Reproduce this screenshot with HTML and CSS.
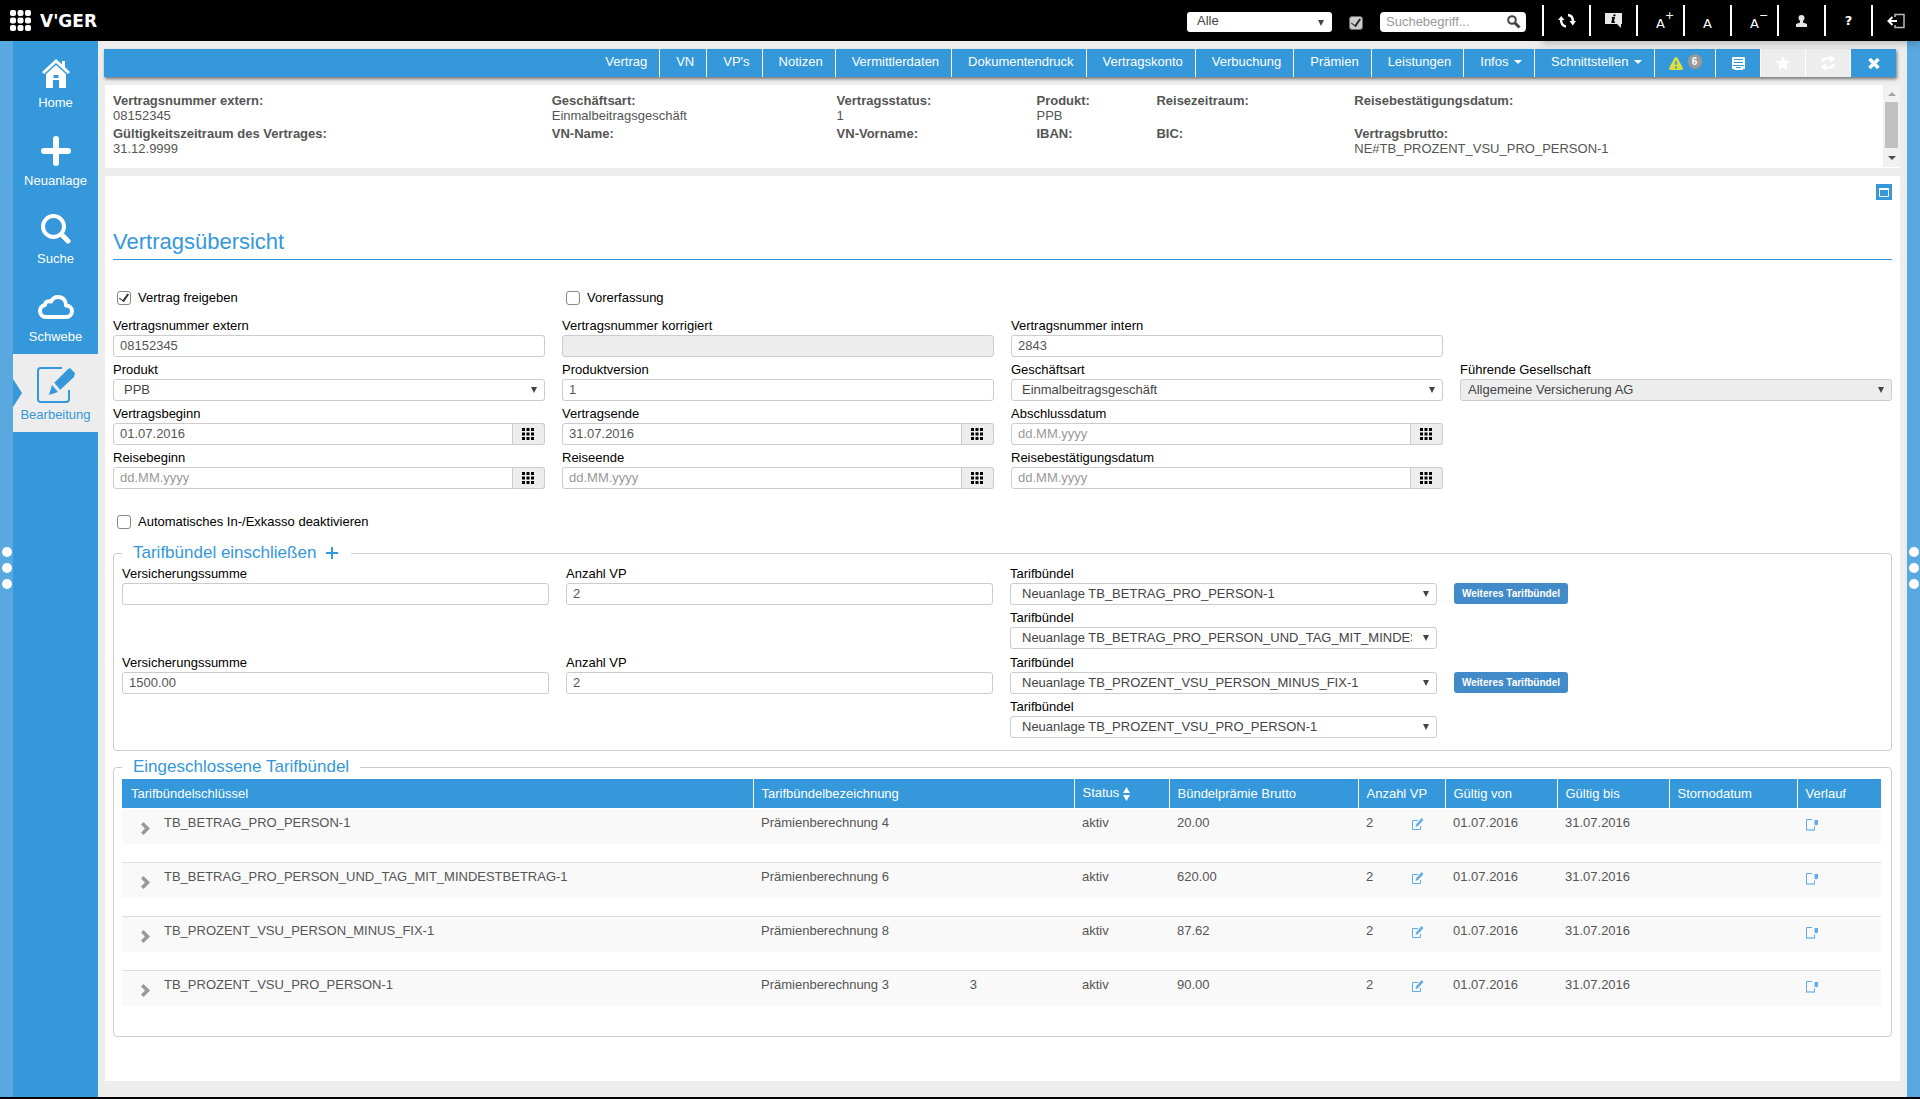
FILE: index.html
```html
<!DOCTYPE html>
<html lang="de">
<head>
    <meta charset="UTF-8">
    <title>Vertragsübersicht</title>
    <link rel="stylesheet" href="styles.css">
</head>
<body>

<!-- Shared icons -->
<svg class="sprite" aria-hidden="true">
    <symbol id="icoGrid" viewBox="0 0 13 13">
        <path d="M0 0h3v3H0zM4.500 0h3v3h-3zM9 0h3v3H9zM0 4.500h3v3H0zM4.500 4.500h3v3h-3zM9 4.500h3v3H9zM0 9h3v3H0zM4.500 9h3v3h-3zM9 9h3v3H9z"/>
    </symbol>
    <symbol id="icoChevron" viewBox="0 0 9 13">
        <path d="M0 2.500 2.500 0 9 6.500 2.500 13 0 10.500l4-4z"/>
    </symbol>
    <symbol id="icoEdit" viewBox="0 0 13 13">
        <path d="M7 2.500H1.500v9h8V8" fill="none" stroke="currentColor"/>
        <path d="M10.500 0 12.500 2 7 8 4.500 9l.8-2.800z"/>
    </symbol>
    <symbol id="icoNote" viewBox="0 0 14 14">
        <path d="M7 1.500H1.500v10.500M9.500 8.500v3.500" fill="none" stroke="currentColor"/>
        <path d="M9.500 2h3.500v4.500L11 7.500l-1.500-1z"/>
        <path d="M1 11h9v2H1z" opacity=".6"/>
    </symbol>
</svg>

<header class="topbar">
    <button type="button" class="topbar__apps" aria-label="Apps">
        <svg width="21" height="21" viewBox="0 0 21 21" fill="currentColor">
            <rect x="0" y="0" width="6" height="6" rx="2"/><rect x="7.500" y="0" width="6" height="6" rx="2"/><rect x="15" y="0" width="6" height="6" rx="2"/>
            <rect x="0" y="7.500" width="6" height="6" rx="2"/><rect x="7.500" y="7.500" width="6" height="6" rx="2"/><rect x="15" y="7.500" width="6" height="6" rx="2"/>
            <rect x="0" y="15" width="6" height="6" rx="2"/><rect x="7.500" y="15" width="6" height="6" rx="2"/><rect x="15" y="15" width="6" height="6" rx="2"/>
        </svg>
    </button>
    <a href="#" class="topbar__logo">V'GER</a>

    <form action="#" class="search">
        <span class="select search__scope">
            <select class="select__input" aria-label="Bereich"><option>Alle</option></select>
        </span>
        <input type="checkbox" class="checkbox search__check" aria-label="Filter" checked>
        <span class="search__box">
            <input type="text" class="search__input" placeholder="Suchebegriff..." aria-label="Suchebegriff">
            <button type="submit" class="search__btn" aria-label="Suchen">
                <svg width="14" height="14" viewBox="0 0 14 14" fill="none" stroke="currentColor">
                    <circle cx="5" cy="5" r="3.800" stroke-width="2"/><path d="m8 8 4.500 4.500" stroke-width="3"/>
                </svg>
            </button>
        </span>
    </form>

    <div class="tools">
        <button type="button" class="tools__btn" aria-label="Aktualisieren">
            <svg width="18" height="16" viewBox="0 0 18 16">
                <path d="M3 6c0 4 1.500 7 5 7.500M10 2c3.500.5 5 3 5 6.500" fill="none" stroke="currentColor" stroke-width="2.500"/>
                <path d="M0 7l3.200-4L6.500 7zM11.500 8h6.500l-3.200 4.500z" fill="currentColor"/>
            </svg>
        </button>
        <button type="button" class="tools__btn" aria-label="Info">
            <svg width="19" height="17" viewBox="0 0 19 17">
                <path d="M1 1h17v11h-1v4l-4-4H1z" fill="#e8e8e8"/>
                <path d="M9.500 2.500h2.200l-.4 1.700H9.100zM8 5h3L10 9.500h1L10.800 11H7.200L8.300 6.300H7.600z" fill="#000"/>
            </svg>
        </button>
        <button type="button" class="tools__btn tools__btn--font" aria-label="Schrift größer">A<sup class="tools__sup">+</sup></button>
        <button type="button" class="tools__btn tools__btn--font" aria-label="Schrift normal">A</button>
        <button type="button" class="tools__btn tools__btn--font" aria-label="Schrift kleiner">A<sup class="tools__sup">−</sup></button>
        <button type="button" class="tools__btn" aria-label="Benutzer">
            <svg width="11" height="12" viewBox="0 0 11 12" fill="#e2e4e8">
                <circle cx="5.500" cy="3" r="3"/><path d="M4 5h3v2.500l4 1.500v3H0V9l4-1.500z"/>
            </svg>
        </button>
        <button type="button" class="tools__btn tools__btn--help" aria-label="Hilfe">?</button>
        <button type="button" class="tools__btn" aria-label="Abmelden">
            <svg width="18" height="16" viewBox="0 0 18 16" fill="none" stroke="currentColor">
                <path d="M8 4V1.500h9v13H8V12" stroke="#bbb" stroke-width="1.500"/>
                <path d="M10 8H2M5.500 4 1.500 8l4 4" stroke-width="2"/>
            </svg>
        </button>
    </div>
</header>

<div class="layout">
    <div class="edge"><span class="edge__dot"></span><span class="edge__dot"></span><span class="edge__dot"></span></div>

    <nav class="sidebar">
        <a href="#" class="sidebar__item">
            <svg class="sidebar__icon" width="30" height="30" viewBox="0 0 30 30" fill="currentColor">
                <path d="M15 1 1 14l2 2L15 5l12 11 2-2-5-4.700V3h-3v3.500z"/>
                <path d="M15 7 5 16v14h7v-8h6v8h7V16zM12.500 17h5v3h-5z" fill-rule="evenodd"/>
            </svg>
            Home
        </a>
        <a href="#" class="sidebar__item">
            <svg class="sidebar__icon" width="30" height="30" viewBox="0 0 30 30" fill="none" stroke="currentColor" stroke-width="6" stroke-linecap="round">
                <path d="M15 3v24M3 15h24"/>
            </svg>
            Neuanlage
        </a>
        <a href="#" class="sidebar__item">
            <svg class="sidebar__icon" width="30" height="30" viewBox="0 0 30 30" fill="none" stroke="currentColor" stroke-linecap="round">
                <circle cx="12.500" cy="12.500" r="10.500" stroke-width="4"/><path d="m21 21 6 6" stroke-width="5"/>
            </svg>
            Suche
        </a>
        <a href="#" class="sidebar__item">
            <svg class="sidebar__icon" width="38" height="26" viewBox="0 0 38 26" fill="none" stroke="currentColor" stroke-width="4" stroke-linejoin="round">
                <path d="M9 23a6 6 0 0 1-6-6 6 6 0 0 1 5-6c0-3 3-4.500 6-3.500C15.500 4.500 18 3 21 3c5 0 8 3.500 8 8.500 3.500 0 6 2.500 6 5.500 0 3.500-2.500 6-6 6z"/>
            </svg>
            Schwebe
        </a>
        <a href="#" class="sidebar__item sidebar__item--active">
            <svg class="sidebar__icon" width="40" height="38" viewBox="0 0 40 38">
                <path d="M26 2H5a3 3 0 0 0-3 3v28a3 3 0 0 0 3 3h25a3 3 0 0 0 3-3v-9" fill="none" stroke="currentColor" stroke-width="2"/>
                <path d="m31 4 3-2 5 5-1 4-14 13-6-7zM16 19l6 7-9 3z" fill="currentColor"/>
                <path d="m16 16 7 8" stroke="#ededed" stroke-width="2"/>
            </svg>
            Bearbeitung
        </a>
    </nav>

    <main class="content">
        <nav class="tabs">
            <a href="#" class="tabs__item">Vertrag</a>
            <a href="#" class="tabs__item">VN</a>
            <a href="#" class="tabs__item">VP's</a>
            <a href="#" class="tabs__item">Notizen</a>
            <a href="#" class="tabs__item">Vermittlerdaten</a>
            <a href="#" class="tabs__item">Dokumentendruck</a>
            <a href="#" class="tabs__item">Vertragskonto</a>
            <a href="#" class="tabs__item">Verbuchung</a>
            <a href="#" class="tabs__item">Prämien</a>
            <a href="#" class="tabs__item">Leistungen</a>
            <a href="#" class="tabs__item">Infos <span class="tabs__caret"></span></a>
            <a href="#" class="tabs__item">Schnittstellen <span class="tabs__caret"></span></a>
            <button type="button" class="tabs__btn tabs__btn--wide" aria-label="Warnungen">
                <svg width="14" height="13" viewBox="0 0 14 13">
                    <path d="M7 0q1 0 1.500 1L14 11q0 2-1.500 2h-11Q0 13 0 11L5.500 1Q6 0 7 0z" fill="#dcdc3c"/>
                    <path d="M6 4h2l-.4 4H6.400zM6 9.500h2v2H6z" fill="#3498db"/>
                </svg>
                <span class="tabs__badge">6</span>
            </button>
            <button type="button" class="tabs__btn" aria-label="Speichern">
                <svg width="13" height="13" viewBox="0 0 13 13">
                    <path d="M1 0h11q1 0 1 1v11h-2v1H2v-1H0V1q0-1 1-1z" fill="#fff"/>
                    <path d="M2 2.500h9M2 5.500h9M1 8.500h11M4 10.500h5" stroke="#3498db"/>
                </svg>
            </button>
            <button type="button" class="tabs__btn" aria-label="Favorit" disabled>
                <svg width="14" height="14" viewBox="0 0 14 14" fill="currentColor">
                    <path d="m7 0 2.100 4.700 4.900.6-3.600 3.400 1 5.300L7 11.300 2.600 14l1-5.300L0 5.300l4.900-.6z"/>
                </svg>
            </button>
            <button type="button" class="tabs__btn" aria-label="Neu laden" disabled>
                <svg width="16" height="16" viewBox="0 0 16 16">
                    <path d="M2 7c0-3 4-4 9-3.500M14 9c0 3-4 4-9 3.500" fill="none" stroke="currentColor" stroke-width="2.500"/>
                    <path d="m10 0 5 4-5 4zM6 8l-5 4 5 4z" fill="currentColor"/>
                </svg>
            </button>
            <button type="button" class="tabs__btn" aria-label="Schließen">
                <svg width="12" height="11" viewBox="0 0 12 11" fill="none" stroke="currentColor" stroke-width="3.500"><path d="m1.500 1 9 9M10.500 1l-9 9"/></svg>
            </button>
        </nav>

        <section class="summary">
            <dl class="summary__list">
                <div><dt>Vertragsnummer extern:</dt><dd>08152345</dd></div>
                <div><dt>Geschäftsart:</dt><dd>Einmalbeitragsgeschäft</dd></div>
                <div><dt>Vertragsstatus:</dt><dd>1</dd></div>
                <div><dt>Produkt:</dt><dd>PPB</dd></div>
                <div><dt>Reisezeitraum:</dt><dd></dd></div>
                <div><dt>Reisebestätigungsdatum:</dt><dd></dd></div>
                <div><dt>Gültigkeitszeitraum des Vertrages:</dt><dd>31.12.9999</dd></div>
                <div><dt>VN-Name:</dt><dd></dd></div>
                <div><dt>VN-Vorname:</dt><dd></dd></div>
                <div><dt>IBAN:</dt><dd></dd></div>
                <div><dt>BIC:</dt><dd></dd></div>
                <div><dt>Vertragsbrutto:</dt><dd>NE#TB_PROZENT_VSU_PRO_PERSON-1</dd></div>
            </dl>
            <div class="scroll" aria-hidden="true">
                <span class="scroll__arrow scroll__arrow--up"></span>
                <span class="scroll__thumb"></span>
                <span class="scroll__arrow"></span>
            </div>
        </section>

        <form action="#" class="panel">
            <button type="button" class="panel__toggle" aria-label="Maximieren">
                <svg width="10" height="9" viewBox="0 0 10 9" fill="none" stroke="#fff"><path d="M.5 1h9v7.500h-9z"/><path d="M0 1h10" stroke-width="2"/></svg>
            </button>
            <h1 class="panel__title">Vertragsübersicht</h1>

            <div class="grid">
                <label class="check"><input type="checkbox" class="checkbox" checked> Vertrag freigeben</label>
                <label class="check"><input type="checkbox" class="checkbox"> Vorerfassung</label>
            </div>

            <div class="grid grid--fields">
                <div class="field">
                    <label for="vnExtern" class="field__label">Vertragsnummer extern</label>
                    <input type="text" id="vnExtern" class="input" value="08152345">
                </div>
                <div class="field">
                    <label for="vnKorr" class="field__label">Vertragsnummer korrigiert</label>
                    <input type="text" id="vnKorr" class="input" disabled>
                </div>
                <div class="field">
                    <label for="vnIntern" class="field__label">Vertragsnummer intern</label>
                    <input type="text" id="vnIntern" class="input" value="2843">
                </div>

                <div class="field grid__first">
                    <label for="produkt" class="field__label">Produkt</label>
                    <span class="select"><select id="produkt" class="select__input"><option>PPB</option></select></span>
                </div>
                <div class="field">
                    <label for="version" class="field__label">Produktversion</label>
                    <input type="text" id="version" class="input" value="1">
                </div>
                <div class="field">
                    <label for="art" class="field__label">Geschäftsart</label>
                    <span class="select"><select id="art" class="select__input"><option>Einmalbeitragsgeschäft</option></select></span>
                </div>
                <div class="field">
                    <label for="gesellschaft" class="field__label">Führende Gesellschaft</label>
                    <span class="select"><select id="gesellschaft" class="select__input" disabled><option>Allgemeine Versicherung AG</option></select></span>
                </div>

                <div class="field">
                    <label for="vBeginn" class="field__label">Vertragsbeginn</label>
                    <span class="date"><input type="text" id="vBeginn" class="input" value="01.07.2016"><button type="button" class="date__btn" aria-label="Kalender"><svg width="13" height="13"><use href="#icoGrid"/></svg></button></span>
                </div>
                <div class="field">
                    <label for="vEnde" class="field__label">Vertragsende</label>
                    <span class="date"><input type="text" id="vEnde" class="input" value="31.07.2016"><button type="button" class="date__btn" aria-label="Kalender"><svg width="13" height="13"><use href="#icoGrid"/></svg></button></span>
                </div>
                <div class="field">
                    <label for="abschluss" class="field__label">Abschlussdatum</label>
                    <span class="date"><input type="text" id="abschluss" class="input" placeholder="dd.MM.yyyy"><button type="button" class="date__btn" aria-label="Kalender"><svg width="13" height="13"><use href="#icoGrid"/></svg></button></span>
                </div>

                <div class="field grid__first">
                    <label for="rBeginn" class="field__label">Reisebeginn</label>
                    <span class="date"><input type="text" id="rBeginn" class="input" placeholder="dd.MM.yyyy"><button type="button" class="date__btn" aria-label="Kalender"><svg width="13" height="13"><use href="#icoGrid"/></svg></button></span>
                </div>
                <div class="field">
                    <label for="rEnde" class="field__label">Reiseende</label>
                    <span class="date"><input type="text" id="rEnde" class="input" placeholder="dd.MM.yyyy"><button type="button" class="date__btn" aria-label="Kalender"><svg width="13" height="13"><use href="#icoGrid"/></svg></button></span>
                </div>
                <div class="field">
                    <label for="rDatum" class="field__label">Reisebestätigungsdatum</label>
                    <span class="date"><input type="text" id="rDatum" class="input" placeholder="dd.MM.yyyy"><button type="button" class="date__btn" aria-label="Kalender"><svg width="13" height="13"><use href="#icoGrid"/></svg></button></span>
                </div>
            </div>

            <label class="check check--single"><input type="checkbox" class="checkbox"> Automatisches In-/Exkasso deaktivieren</label>

            <fieldset class="box">
                <legend class="box__title">Tarifbündel einschließen
                    <button type="button" class="box__add" aria-label="Tarifbündel hinzufügen">
                        <svg width="12" height="12" viewBox="0 0 12 12" stroke="currentColor" stroke-width="2"><path d="M6 0v12M0 6h12"/></svg>
                    </button>
                </legend>

                <div class="grid bundle">
                    <div class="field">
                        <label for="summe1" class="field__label">Versicherungssumme</label>
                        <input type="text" id="summe1" class="input">
                    </div>
                    <div class="field">
                        <label for="anzahl1" class="field__label">Anzahl VP</label>
                        <input type="text" id="anzahl1" class="input" value="2">
                    </div>
                    <div class="bundle__selects">
                        <div class="field">
                            <label for="tb1" class="field__label">Tarifbündel</label>
                            <span class="select"><select id="tb1" class="select__input"><option>Neuanlage TB_BETRAG_PRO_PERSON-1</option></select></span>
                        </div>
                        <div class="field">
                            <label for="tb2" class="field__label">Tarifbündel</label>
                            <span class="select"><select id="tb2" class="select__input"><option>Neuanlage TB_BETRAG_PRO_PERSON_UND_TAG_MIT_MINDESTBETRAG-1</option></select></span>
                        </div>
                    </div>
                    <button type="button" class="bundle__more">Weiteres Tarifbündel</button>
                </div>

                <div class="grid bundle">
                    <div class="field">
                        <label for="summe2" class="field__label">Versicherungssumme</label>
                        <input type="text" id="summe2" class="input" value="1500.00">
                    </div>
                    <div class="field">
                        <label for="anzahl2" class="field__label">Anzahl VP</label>
                        <input type="text" id="anzahl2" class="input" value="2">
                    </div>
                    <div class="bundle__selects">
                        <div class="field">
                            <label for="tb3" class="field__label">Tarifbündel</label>
                            <span class="select"><select id="tb3" class="select__input"><option>Neuanlage TB_PROZENT_VSU_PERSON_MINUS_FIX-1</option></select></span>
                        </div>
                        <div class="field">
                            <label for="tb4" class="field__label">Tarifbündel</label>
                            <span class="select"><select id="tb4" class="select__input"><option>Neuanlage TB_PROZENT_VSU_PRO_PERSON-1</option></select></span>
                        </div>
                    </div>
                    <button type="button" class="bundle__more">Weiteres Tarifbündel</button>
                </div>
            </fieldset>

            <fieldset class="box">
                <legend class="box__title">Eingeschlossene Tarifbündel</legend>

                <table class="table">
                    <colgroup>
                        <col class="table__key"><col class="table__name"><col class="table__status"><col class="table__sum"><col class="table__count">
                        <col class="table__date"><col class="table__date"><col class="table__storno"><col class="table__history">
                    </colgroup>
                    <thead>
                        <tr>
                            <th>Tarifbündelschlüssel</th>
                            <th>Tarifbündelbezeichnung</th>
                            <th>Status <svg width="7" height="14" viewBox="0 0 7 14" fill="currentColor"><path d="M3.500 0 7 6H0zM0 8h7l-3.500 6z"/></svg></th>
                            <th>Bündelprämie Brutto</th>
                            <th>Anzahl VP</th>
                            <th>Gültig von</th>
                            <th>Gültig bis</th>
                            <th>Stornodatum</th>
                            <th>Verlauf</th>
                        </tr>
                    </thead>
                    <tbody>
                        <tr class="table__row">
                            <td><div class="table__toggle"><button type="button" class="table__btn table__btn--open" aria-label="Aufklappen"><svg width="9" height="13"><use href="#icoChevron"/></svg></button>TB_BETRAG_PRO_PERSON-1</div></td>
                            <td>Prämienberechnung 4</td>
                            <td>aktiv</td>
                            <td>20.00</td>
                            <td><div class="table__edit">2 <button type="button" class="table__btn" aria-label="Bearbeiten"><svg width="13" height="13"><use href="#icoEdit"/></svg></button></div></td>
                            <td>01.07.2016</td>
                            <td>31.07.2016</td>
                            <td></td>
                            <td><button type="button" class="table__btn" aria-label="Verlauf"><svg width="14" height="14"><use href="#icoNote"/></svg></button></td>
                        </tr>
                        <tr class="table__detail"><td colspan="9"></td></tr>
                        <tr class="table__row">
                            <td><div class="table__toggle"><button type="button" class="table__btn table__btn--open" aria-label="Aufklappen"><svg width="9" height="13"><use href="#icoChevron"/></svg></button>TB_BETRAG_PRO_PERSON_UND_TAG_MIT_MINDESTBETRAG-1</div></td>
                            <td>Prämienberechnung 6</td>
                            <td>aktiv</td>
                            <td>620.00</td>
                            <td><div class="table__edit">2 <button type="button" class="table__btn" aria-label="Bearbeiten"><svg width="13" height="13"><use href="#icoEdit"/></svg></button></div></td>
                            <td>01.07.2016</td>
                            <td>31.07.2016</td>
                            <td></td>
                            <td><button type="button" class="table__btn" aria-label="Verlauf"><svg width="14" height="14"><use href="#icoNote"/></svg></button></td>
                        </tr>
                        <tr class="table__detail"><td colspan="9"></td></tr>
                        <tr class="table__row">
                            <td><div class="table__toggle"><button type="button" class="table__btn table__btn--open" aria-label="Aufklappen"><svg width="9" height="13"><use href="#icoChevron"/></svg></button>TB_PROZENT_VSU_PERSON_MINUS_FIX-1</div></td>
                            <td>Prämienberechnung 8</td>
                            <td>aktiv</td>
                            <td>87.62</td>
                            <td><div class="table__edit">2 <button type="button" class="table__btn" aria-label="Bearbeiten"><svg width="13" height="13"><use href="#icoEdit"/></svg></button></div></td>
                            <td>01.07.2016</td>
                            <td>31.07.2016</td>
                            <td></td>
                            <td><button type="button" class="table__btn" aria-label="Verlauf"><svg width="14" height="14"><use href="#icoNote"/></svg></button></td>
                        </tr>
                        <tr class="table__detail"><td colspan="9"></td></tr>
                        <tr class="table__row">
                            <td><div class="table__toggle"><button type="button" class="table__btn table__btn--open" aria-label="Aufklappen"><svg width="9" height="13"><use href="#icoChevron"/></svg></button>TB_PROZENT_VSU_PRO_PERSON-1</div></td>
                            <td><div class="table__calc"><span>Prämienberechnung 3</span><span>3</span></div></td>
                            <td>aktiv</td>
                            <td>90.00</td>
                            <td><div class="table__edit">2 <button type="button" class="table__btn" aria-label="Bearbeiten"><svg width="13" height="13"><use href="#icoEdit"/></svg></button></div></td>
                            <td>01.07.2016</td>
                            <td>31.07.2016</td>
                            <td></td>
                            <td><button type="button" class="table__btn" aria-label="Verlauf"><svg width="14" height="14"><use href="#icoNote"/></svg></button></td>
                        </tr>
                        <tr class="table__detail"><td colspan="9"></td></tr>
                    </tbody>
                </table>
            </fieldset>
        </form>
    </main>

    <div class="edge"><span class="edge__dot"></span><span class="edge__dot"></span><span class="edge__dot"></span></div>
</div>

</body>
</html>
```
FILE: styles.css
```css
* {
    box-sizing: border-box;
}

body {
    display: flex;
    flex-direction: column;
    min-height: 100vh;
    margin: 0;
    border-bottom: 2px solid #000;
    background-color: #ededed;
    color: #000;
    font: 13px/15px "Liberation Sans", Arial, sans-serif;
}

button,
input,
select {
    margin: 0;
    font: inherit;
    color: inherit;
}
button {
    padding: 0;
    border: 0;
    background: none;
    cursor: pointer;
}
a {
    color: inherit;
    text-decoration: none;
}
svg {
    display: block;
}

.sprite {
    display: none;
}

/* Top bar */

.topbar {
    display: flex;
    align-items: center;
    height: 41px;
    padding-left: 10px;
    background-color: #000;
    color: #fff;
}
.topbar__logo {
    margin-left: 9px;
    font: bold 17px/20px "DejaVu Sans", sans-serif;
}

.search {
    display: flex;
    align-items: center;
    margin-left: auto;
    padding-top: 2px;
    color: #444;
}
.search__scope {
    width: 145px;
}
.search__scope .select__input {
    height: 20px;
    border: 0;
}
.search__check {
    margin: 2px 17px 0;
    opacity: .8;
}
.search__box {
    display: flex;
    align-items: center;
    width: 146px;
    height: 20px;
    padding: 0 5px 0 6px;
    border-radius: 4px;
    background-color: #fff;
}
.search__input {
    flex: 1;
    min-width: 0;
    padding: 0;
    border: 0;
    outline: none;
    background: none;
}
.search__input::placeholder,
.input::placeholder {
    color: #999;
}

.tools {
    position: relative;
    display: flex;
    align-items: center;
    height: 41px;
    margin-left: 16px;
    padding-right: 2px;
    background-color: #000;
    box-shadow: 0 3px 7px rgba(0, 0, 0, .2);
}
.tools__btn {
    display: flex;
    justify-content: center;
    align-items: center;
    width: 47px;
    height: 31px;
    border-left: 2px solid #fff;
}
.tools__btn--font {
    padding-top: 6px;
    font: 13px/15px "DejaVu Sans", sans-serif;
}
.tools__sup {
    width: 8px;
    height: 32px;
    margin-right: -8px;
    font-size: 11px;
}
.tools__btn--help {
    font: bold 13px/15px "DejaVu Sans", sans-serif;
}

/* Page frame */

.layout {
    display: flex;
    flex: 1;
}

.edge {
    display: flex;
    flex-direction: column;
    justify-content: center;
    align-items: center;
    gap: 6px;
    width: 13px;
    padding-bottom: 2px;
    background-color: #5aa8e0;
}
.edge__dot {
    width: 10px;
    height: 10px;
    border-radius: 50%;
    background-color: #fff;
}

.sidebar {
    width: 85px;
    padding-top: 1px;
    background-color: #3498db;
    color: #fff;
    text-align: center;
}
.sidebar__item {
    position: relative;
    display: block;
    height: 78px;
    padding-top: 12px;
}
.sidebar__icon {
    height: 38px;
    margin: 0 auto 3px;
}
.sidebar__item--active {
    background-color: #ededed;
    color: #3498db;
}
.sidebar__item--active::before {
    content: "";
    position: absolute;
    top: 25px;
    left: 0;
    border: 14px solid transparent;
    border-left: 9px solid #3498db;
    border-right: 0;
}

.content {
    display: flex;
    flex: 1;
    flex-direction: column;
    gap: 8px;
    min-width: 0;
    padding: 8px 7px 16px;
}

/* Tabs */

.tabs {
    display: flex;
    justify-content: flex-end;
    height: 28px;
    margin: 0 4px 0 -1px;
    background-color: #3498db;
    box-shadow: 1px 2px 3px rgba(0, 0, 0, .5);
    color: #fff;
    line-height: 26px;
}
.tabs__item {
    padding: 0 12px 0 16px;
    border-right: 1px solid #fff;
}
.tabs__caret {
    display: inline-block;
    margin: 0 0 2px 2px;
    border: 4px solid transparent;
    border-top-color: #fff;
    border-bottom: 0;
    vertical-align: middle;
}
.tabs__btn {
    display: flex;
    justify-content: center;
    align-items: center;
    gap: 5px;
    width: 45px;
    border-right: 1px solid #fff;
}
.tabs__btn:last-child {
    border-right: 0;
}
.tabs__btn:disabled {
    background-color: #ededed;
    color: #fff;
}
.tabs__btn--wide {
    width: 61px;
}
.tabs__badge {
    width: 14px;
    margin-bottom: 4px;
    border-radius: 7px;
    background-color: #999;
    font-size: 10px;
    font-weight: bold;
    line-height: 15px;
}

/* Contract summary */

.summary {
    display: flex;
    height: 83px;
    background-color: #fff;
    color: #555;
}
.summary__list {
    display: grid;
    flex: 1;
    grid-template-columns: 439fr 285fr 200fr 120fr 198fr 529fr;
    align-content: start;
    row-gap: 3px;
    margin: 0;
    padding: 8px 0 0 8px;
}
.summary__list dt {
    font-weight: bold;
}
.summary__list dd {
    min-height: 15px;
    margin: 0;
}

.scroll {
    display: flex;
    flex-direction: column;
    align-items: center;
    width: 17px;
    margin-bottom: 1px;
    background-color: #f1f1f1;
}
.scroll__thumb {
    width: 13px;
    height: 46px;
    margin: 6px 0 8px;
    background-color: #c1c1c1;
}
.scroll__arrow {
    border: 4px solid transparent;
    border-top-color: #505050;
    border-bottom: 0;
}
.scroll__arrow--up {
    margin-top: 7px;
    border-top: 0;
    border-bottom: 4px solid #a3a3a3;
}

/* Form */

.panel {
    flex: 1;
    padding: 8px 8px 0;
    background-color: #fff;
}
.panel__toggle {
    display: flex;
    justify-content: center;
    align-items: center;
    width: 16px;
    height: 16px;
    margin-left: auto;
    background-color: #3498db;
}
.panel__title {
    margin: 28px 0 30px;
    padding-bottom: 3px;
    border-bottom: 1px solid #3498db;
    color: #3498db;
    font-size: 22px;
    font-weight: normal;
    line-height: 28px;
}

.grid {
    display: grid;
    grid-template-columns: repeat(4, minmax(0, 1fr));
    gap: 4px 17px;
}
.grid--fields {
    margin-top: 12px;
}
.grid__first {
    grid-column-start: 1;
}

.check {
    display: flex;
    align-items: center;
    gap: 7px;
    height: 15px;
    padding-left: 4px;
}
.check--single {
    margin: 25px 0 14px;
}
.checkbox {
    display: flex;
    justify-content: center;
    align-items: center;
    appearance: none;
    width: 14px;
    height: 14px;
    border: 1px solid #888;
    border-radius: 3px;
    background-color: #fff;
}
.checkbox:checked::before {
    content: "";
    width: 4px;
    height: 8px;
    margin-bottom: 2px;
    border: solid #333;
    border-width: 0 2px 1px 0;
    transform: rotate(35deg);
}

.field__label {
    display: block;
    margin-bottom: 1px;
    line-height: 17px;
}
.input,
.select__input {
    display: block;
    width: 100%;
    height: 22px;
    padding: 0 6px 2px;
    border: 1px solid #ccc;
    border-radius: 3px;
    background-color: #fff;
    color: #555;
}
.input:disabled,
.select__input:disabled {
    background-color: #ededed;
    opacity: 1;
}

.select {
    position: relative;
    display: block;
}
.select__input {
    appearance: none;
    padding: 0 24px 2px 10px;
    color: #444;
}
.select__input:disabled {
    padding-left: 7px;
}
.select::after {
    content: "";
    position: absolute;
    top: 8px;
    right: 8px;
    border: 3px solid transparent;
    border-top: 6px solid #444;
    border-bottom: 0;
    pointer-events: none;
}

.date {
    display: flex;
}
.date .input {
    border-radius: 3px 0 0 3px;
}
.date__btn {
    display: flex;
    flex: none;
    justify-content: center;
    align-items: center;
    width: 32px;
    border: 1px solid #ccc;
    border-left: 0;
    border-radius: 0 3px 3px 0;
    background-color: #ededed;
}

/* Boxes */

.box {
    min-width: 0;
    margin: 0 0 6px;
    padding: 2px 10px 12px 8px;
    border: 1px solid #ccc;
    border-radius: 4px;
}
.box__title {
    display: flex;
    align-items: center;
    gap: 10px;
    padding: 0 11px;
    color: #3498db;
    font-size: 17px;
    line-height: 20px;
}
.box__add {
    margin-right: 2px;
}

.bundle + .bundle {
    margin-top: 5px;
}
.bundle .select__input {
    padding-left: 11px;
}
.bundle__selects {
    display: grid;
    gap: 4px;
}
.bundle__more {
    justify-self: start;
    align-self: start;
    height: 21px;
    margin-top: 18px;
    padding: 0 8px;
    border-radius: 3px;
    background-color: #428bca;
    color: #fff;
    font-size: 10px;
    font-weight: bold;
}

/* Bundle table */

.table {
    width: 100%;
    border-collapse: collapse;
    table-layout: fixed;
    color: #555;
}
.table__name {
    width: 321px;
}
.table__status {
    width: 95px;
}
.table__sum {
    width: 189px;
}
.table__count {
    width: 87px;
}
.table__date {
    width: 112px;
}
.table__storno {
    width: 128px;
}
.table__history {
    width: 84px;
}
.table th {
    height: 29px;
    padding: 0 0 0 8px;
    border-left: 1px solid #fff;
    background-color: #3498db;
    color: #fff;
    font-weight: normal;
    text-align: left;
}
.table th:first-child {
    padding-left: 9px;
    border-left: 0;
}
.table th svg {
    display: inline-block;
    vertical-align: middle;
}
.table td {
    padding: 6px 0 0 8px;
    vertical-align: top;
}
.table__row {
    height: 36px;
    border-top: 1px solid #ddd;
    background-color: #f9f9f9;
}
.table__row:first-child {
    border-top-color: #fff;
}
.table .table__detail td {
    height: 18px;
    padding: 0;
}
.table__toggle {
    display: flex;
    gap: 14px;
    padding-left: 11px;
}
.table__edit {
    display: flex;
    justify-content: space-between;
    padding-right: 21px;
}
.table__calc {
    display: grid;
    grid-template-columns: 2fr 1fr;
}
.table__btn {
    height: 15px;
    padding-top: 3px;
    color: #62abe8;
    fill: currentColor;
}
.table__btn--open {
    padding-top: 7px;
    color: #999;
}
```
